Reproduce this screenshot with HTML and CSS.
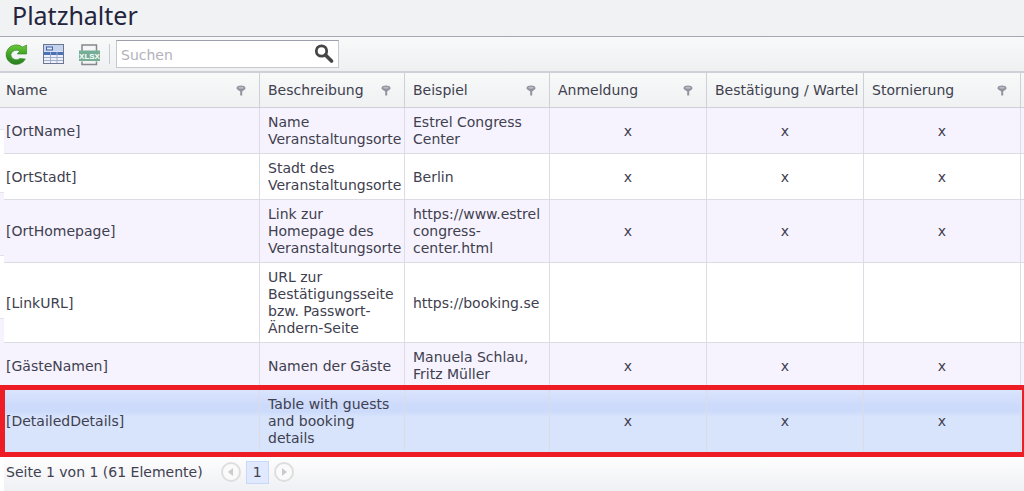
FILE: index.html
```html
<!DOCTYPE html>
<html lang="de">
<head>
<meta charset="utf-8">
<title>Platzhalter</title>
<link rel="stylesheet" href="styles.css">
</head>
<body>
<svg class="defs" aria-hidden="true">
  <defs>
    <linearGradient id="green" x1="0" y1="0" x2="0" y2="1"><stop offset="0" stop-color="#6cc83c"/><stop offset="0.5" stop-color="#3fa325"/><stop offset="1" stop-color="#2a7d22"/></linearGradient>
    <symbol id="funnel" viewBox="0 0 10 11">
      <path d="M0.5 3C0.5 -0.3 9.5 -0.3 9.5 3C9.5 5 6.4 5.6 6.2 6.6V10.5H4.2V6.6C4 5.6 0.5 5 0.5 3Z" fill="#92939e"/>
      <ellipse cx="5" cy="2.7" rx="2.8" ry="1" fill="#bbbcc5"/>
    </symbol>
  </defs>
</svg>
<header class="title-bar"><h1>Platzhalter</h1></header>
<div class="toolbar">
  <button class="tool" type="button" aria-label="Aktualisieren">
    <svg width="24" height="24" viewBox="0 0 24 24"><path d="M21.400 17A10.200 9.800 0 1 1 18.600 5L22.600 3V12H13.300L15.800 9A6 5.600 0 0 0 6.800 12.500A5.600 5.400 0 0 0 16 16.500Z" fill="url(#green)" stroke="#2d7f22" stroke-width="0.600" stroke-linejoin="round"/></svg>
  </button>
  <button class="tool" type="button" aria-label="Spalten">
    <svg width="24" height="24" viewBox="0 0 24 24"><rect x="2.5" y="2.5" width="20" height="19" fill="#eef1f8" stroke="#6a7692"/><path d="M3 3H22V9.5H3Z" fill="#c5d3ec"/><rect x="5.500" y="5" width="6" height="3" fill="#dfe8f7" stroke="#3e62a8"/><path d="M3 10H22V13H3Z" fill="#4a70b6"/><path d="M3 15.5H22M3 18.5H22M9.5 10V21M16 10V21" stroke="#9facca"/></svg>
  </button>
  <button class="tool" type="button" aria-label="XLSX exportieren">
    <svg width="24" height="24" viewBox="0 0 24 24"><path d="M5 9V3H19.500V9M5 19.500V22.500H19.500V19.500" fill="none" stroke="#85898b" stroke-width="1.500"/><rect x="2" y="8.500" width="21" height="10.500" fill="#76ad97"/><text x="12.5" y="17" text-anchor="middle" class="xlsx">XLSX</text></svg>
  </button>
  <span class="separator"></span>
  <form class="search" role="search">
    <input type="text" placeholder="Suchen" aria-label="Suchen">
    <button type="button" aria-label="Suche starten">
      <svg width="20" height="20" viewBox="0 0 20 20"><circle cx="7.5" cy="7" r="5.2" fill="none" stroke="#454545" stroke-width="2.8"/><path d="M11.5 11L17.5 17" stroke="#454545" stroke-width="3.6" stroke-linecap="round"/></svg>
    </button>
  </form>
</div>
<main class="grid">
  <table>
    <colgroup><col class="c-name"><col class="c-text"><col class="c-text"><col class="c-flag"><col class="c-flag"><col class="c-flag"><col></colgroup>
    <thead>
      <tr>
        <th><div class="head"><span>Name</span><svg><use href="#funnel"/></svg></div></th>
        <th><div class="head"><span>Beschreibung</span><svg><use href="#funnel"/></svg></div></th>
        <th><div class="head"><span>Beispiel</span><svg><use href="#funnel"/></svg></div></th>
        <th><div class="head"><span>Anmeldung</span><svg><use href="#funnel"/></svg></div></th>
        <th>Bestätigung / Wartel</th>
        <th><div class="head"><span>Stornierung</span><svg><use href="#funnel"/></svg></div></th>
        <th></th>
      </tr>
    </thead>
    <tbody>
      <tr><td>[OrtName]</td><td>Name Veranstaltungsorte</td><td>Estrel Congress Center</td><td>x</td><td>x</td><td>x</td><td></td></tr>
      <tr><td>[OrtStadt]</td><td>Stadt des Veranstaltungsorte</td><td>Berlin</td><td>x</td><td>x</td><td>x</td><td></td></tr>
      <tr><td>[OrtHomepage]</td><td>Link zur Homepage des Veranstaltungsorte</td><td><span class="url">https://www.estrel</span>congress-center.html</td><td>x</td><td>x</td><td>x</td><td></td></tr>
      <tr><td>[LinkURL]</td><td>URL zur Bestätigungsseite bzw. Passwort-Ändern-Seite</td><td><span class="url">https://booking.se</span></td><td></td><td></td><td></td><td></td></tr>
      <tr><td>[GästeNamen]</td><td>Namen der Gäste</td><td>Manuela Schlau, Fritz Müller</td><td>x</td><td>x</td><td>x</td><td></td></tr>
      <tr class="selected"><td>[DetailedDetails]</td><td>Table with guests and booking details</td><td></td><td>x</td><td>x</td><td>x</td><td></td></tr>
    </tbody>
  </table>
  <div class="edge" aria-hidden="true"><i></i><i></i><i></i><i></i></div>
</main>
<footer class="pager">
  <span>Seite 1 von 1 (61 Elemente)</span>
  <nav aria-label="Seiten">
    <button class="arrow" type="button" disabled aria-label="Zurück"><svg width="8" height="8" viewBox="0 0 8 8"><path d="M6 0V8L1 4Z" fill="#c9cacd"/></svg></button>
    <a class="page" href="#" aria-current="page">1</a>
    <button class="arrow" type="button" disabled aria-label="Weiter"><svg width="8" height="8" viewBox="0 0 8 8"><path d="M2 0V8L7 4Z" fill="#c9cacd"/></svg></button>
  </nav>
</footer>
</body>
</html>
```
FILE: styles.css
```css
* { box-sizing: border-box; }
html, body { min-height: 100%; }
body {
  margin: 0;
  background: #fff;
  color: #40404f;
  font: 14px/17px Verdana, "DejaVu Sans", sans-serif;
  overflow-x: hidden;
}
button { padding: 0; border: 0; background: none; font: inherit; }
.defs { position: absolute; width: 0; height: 0; }
.title-bar {
  padding: 0 12px 6px;
  background: #f0f2f4;
  border-bottom: 1px solid #a5a7b2;
}
h1 {
  margin: 0;
  color: #24243c;
  font: 400 25px/30px "Noto Sans", sans-serif;
}
.toolbar {
  display: flex;
  align-items: center;
  height: 34px;
  padding-left: 4px;
  background: linear-gradient(#f8f9f9, #eff0f2);
}
.tool { width: 24px; height: 24px; margin-right: 13px; }
.tool svg { display: block; }
.tool:nth-of-type(2) { margin-right: 12px; }
.tool:nth-of-type(3) { margin-right: 8px; }
.xlsx { font: 700 8px "Liberation Sans", sans-serif; fill: #fff; }
.separator { width: 1px; height: 20px; margin-right: 6px; background: #c9cad0; }
.search {
  display: flex;
  align-items: center;
  width: 223px;
  height: 28px;
  padding-right: 4px;
  border: 1px solid #c6c8d0;
  border-top-color: #9c9ea9;
  background: #fff;
}
.search input {
  flex: 1;
  min-width: 0;
  padding: 3px 4px 0;
  border: 0;
  outline: 0;
  background: none;
  color: inherit;
  font: inherit;
}
.search input::placeholder { color: #b2b2bb; opacity: 1; }
.search svg { display: block; }
.grid { position: relative; }
table { width: 100%; table-layout: fixed; border-collapse: separate; border-spacing: 0; }
.c-name { width: 260px; }
.c-text { width: 145px; }
.c-flag { width: 157px; }
th {
  height: 37px;
  padding: 0 0 0 8px;
  overflow: hidden;
  border: solid #cfd0d7;
  border-width: 2px 1px 1px 0;
  background: linear-gradient(#f8f9f9, #eff1f2);
  font-weight: 400;
  text-align: left;
  white-space: nowrap;
}
.head { display: flex; align-items: center; justify-content: space-between; }
.head svg { width: 10px; height: 11px; margin-right: 13px; }
td {
  padding: 6px 8px 5px;
  overflow: hidden;
  border: solid #dcdce4;
  border-width: 0 1px 1px 0;
}
th:first-child, td:first-child { padding-left: 6px; }
th:last-child, td:last-child { padding: 0; border-right: 0; }
td:nth-child(2), td:nth-child(3) { padding-right: 4px; }
td:nth-child(n+4) { text-align: center; }
tbody tr:nth-child(odd) { background: #f6f3fe; }
.url { display: block; white-space: nowrap; }
tbody .selected {
  position: relative;
  background: linear-gradient(#dbe5fd 0, #ccdafb 17px, #ccdafb 22px, #d8e4fc 28px);
}
.selected td { padding-top: 7px; }
.selected td:first-child::after {
  content: "";
  position: absolute;
  inset: -4px 0;
  border: 5px solid #ee1c25;
  border-right-width: 2px;
}
.edge { position: absolute; left: 0; top: 58px; width: 4px; }
.edge i { display: block; height: 63px; background: #fff; border-top: 1px solid #e4e3ea; }
.edge i:nth-child(even) { background: #f6f3fe; }
.pager {
  display: flex;
  align-items: center;
  gap: 18px;
  min-height: 38px;
  margin-left: 4px;
  padding: 0 2px;
  background: linear-gradient(#fff, #eff0f4);
}
.pager nav { display: flex; align-items: center; gap: 5px; }
.arrow {
  display: grid;
  place-items: center;
  width: 20px;
  height: 20px;
  border: 2px solid #dededf;
  border-radius: 50%;
  background: #fafafa;
}
.page {
  width: 23px;
  padding: 2px 0;
  border: 1px solid #c9d8fa;
  background: #e0e9fd;
  color: inherit;
  text-align: center;
  text-decoration: none;
}
```
